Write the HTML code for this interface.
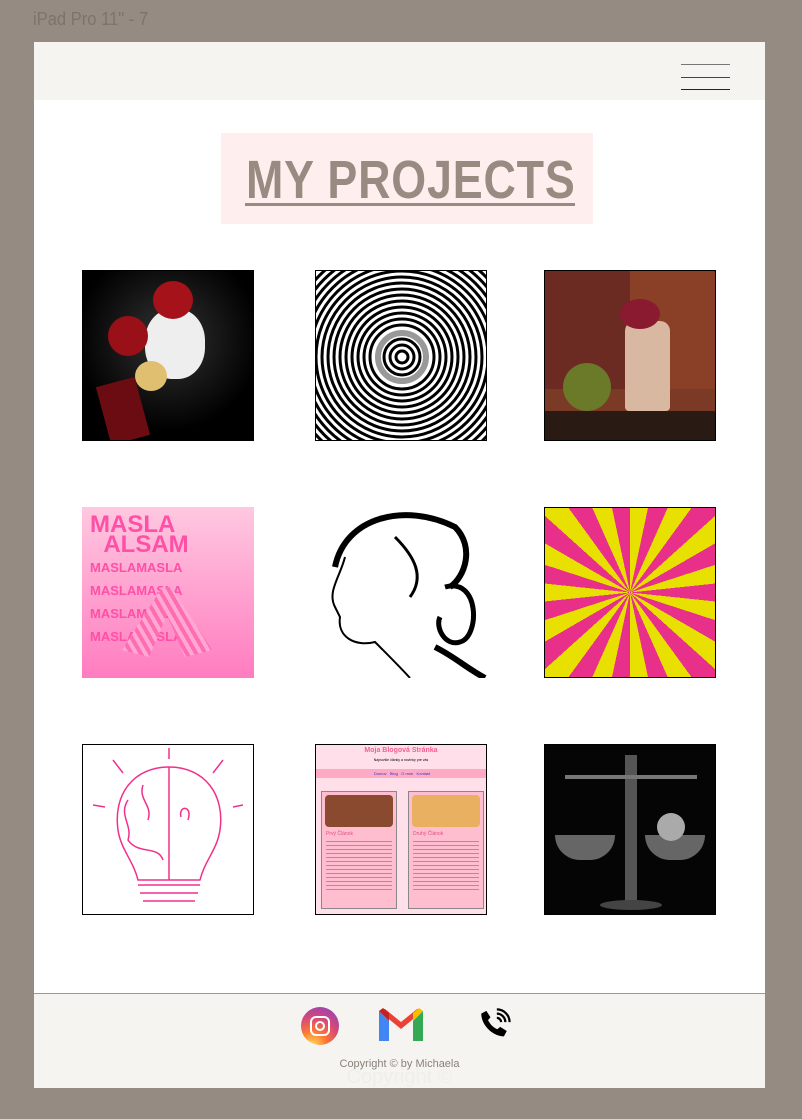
<!DOCTYPE html>
<html><head><meta charset="utf-8"><style>
*{margin:0;padding:0;box-sizing:border-box}
body{width:802px;height:1119px;background:#968b82;position:relative;overflow:hidden;font-family:"Liberation Sans",sans-serif}
.lbl{position:absolute;left:33px;top:9px;font-size:18px;color:#7d736c;transform:scaleX(.92);transform-origin:left}
.frame{position:absolute;left:34px;top:42px;width:731px;height:1046px;background:#fff}
.hdr{position:absolute;left:0;top:0;width:731px;height:58px;background:#f6f4f1}
.hb{position:absolute;left:647px;width:49px;height:1px;background:#444}
.tbox{position:absolute;left:187px;top:91px;width:372px;height:91px;background:#ffeeee}
.ttl{position:absolute;left:212px;top:107px;width:328px;font-size:54px;font-weight:bold;color:#978b82;white-space:nowrap;transform:scaleX(.83);transform-origin:left;letter-spacing:1px}
.ul{position:absolute;left:211px;top:161px;width:330px;height:3px;background:#978b82}
.im{position:absolute;width:172px;height:171px;overflow:hidden;border:1px solid #000}
.ftr{position:absolute;left:0;top:951px;width:731px;height:95px;background:#f6f4f1;border-top:1px solid #999}
.cp{position:absolute;left:0;width:731px;text-align:center;top:64px;font-size:11px;color:#8a817a}
</style></head><body>
<div class="lbl">iPad Pro 11" - 7</div>
<div class="frame">
<div class="hdr"><div class="hb" style="top:22px;background:#777"></div><div class="hb" style="top:35px"></div><div class="hb" style="top:47px;background:#222"></div></div>
<div class="tbox"></div>
<div class="ttl">MY PROJECTS</div>
<div class="ul"></div>

<div class="im" style="left:48px;top:228px;background:radial-gradient(circle at 50% 40%,#333,#000 70%)">
<div style="position:absolute;left:62px;top:38px;width:60px;height:70px;background:#eee;border-radius:45%"></div>
<div style="position:absolute;left:25px;top:45px;width:40px;height:40px;background:#9a1018;border-radius:50%"></div>
<div style="position:absolute;left:70px;top:10px;width:40px;height:38px;background:#a5121a;border-radius:50%"></div>
<div style="position:absolute;left:52px;top:90px;width:32px;height:30px;background:#e0c070;border-radius:50%"></div>
<div style="position:absolute;left:20px;top:110px;width:40px;height:60px;background:#6a0c12;transform:rotate(-15deg)"></div>
</div>

<div class="im" style="left:281px;top:228px;background:#fff">
<svg width="172" height="171" viewBox="0 0 172 171"><g fill="none" stroke="#000" stroke-width="3">
<circle cx="86" cy="86" r="6"/><circle cx="86" cy="86" r="12"/><circle cx="86" cy="86" r="18"/><circle cx="86" cy="86" r="24" stroke="#999" stroke-width="6"/><circle cx="86" cy="86" r="32"/><circle cx="86" cy="86" r="38"/><circle cx="86" cy="86" r="44"/><circle cx="86" cy="86" r="50"/><circle cx="86" cy="86" r="56"/><circle cx="86" cy="86" r="62"/><circle cx="86" cy="86" r="68"/><circle cx="86" cy="86" r="74"/><circle cx="86" cy="86" r="80"/><circle cx="86" cy="86" r="86"/><circle cx="86" cy="86" r="92"/><circle cx="86" cy="86" r="98"/><circle cx="86" cy="86" r="104"/><circle cx="86" cy="86" r="110"/><circle cx="86" cy="86" r="116"/></g></svg>
</div>

<div class="im" style="left:510px;top:228px;background:linear-gradient(90deg,#6b2a22 0 50%,#8a4026 50%)">
<div style="position:absolute;left:0;top:140px;width:172px;height:31px;background:#2a1a14"></div>
<div style="position:absolute;left:0;top:118px;width:172px;height:22px;background:#7a3a25"></div>
<div style="position:absolute;left:80px;top:50px;width:45px;height:90px;background:#d8b8a0;border-radius:10px 10px 4px 4px"></div>
<div style="position:absolute;left:18px;top:92px;width:48px;height:48px;background:#6a7a28;border-radius:50%"></div>
<div style="position:absolute;left:75px;top:28px;width:40px;height:30px;background:#8a1a30;border-radius:50%"></div>
</div>

<div class="im" style="left:48px;top:465px;border:none;background:linear-gradient(#ffc8e0,#ff7cc0)">
<div style="position:absolute;left:8px;top:8px;width:155px;height:80px;color:#ff4fa6;font-weight:bold;font-size:24px;line-height:20px">MASLA &nbsp;&nbsp;ALSAM<br><span style="font-size:13px">MASLAMASLA MASLAMASLA<br>MASLAMASLA MASLAMASLA</span></div>
<div style="position:absolute;left:40px;top:80px;width:90px;height:70px;background:repeating-linear-gradient(60deg,#ff6cb4 0 4px,#ffa8d2 4px 8px);clip-path:polygon(45% 0,55% 0,100% 90%,70% 100%,50% 40%,30% 100%,0 90%)"></div>
</div>

<div class="im" style="left:281px;top:465px;border:none;background:#fff">
<svg width="172" height="171" viewBox="0 0 172 171" fill="none" stroke="#000">
<path d="M20 60 C30 10 90 -5 140 20 C160 40 150 70 135 80" stroke-width="6"/>
<path d="M30 50 C25 70 12 85 20 100 L25 110 C22 130 40 140 60 135 C75 150 85 160 95 171" stroke-width="2"/>
<path d="M130 80 C165 70 165 130 145 135 C130 140 120 120 125 110" stroke-width="5"/>
<path d="M120 140 C140 150 150 160 170 171" stroke-width="6"/>
<path d="M80 30 C100 50 110 70 95 90" stroke-width="3"/>
</svg>
</div>

<div class="im" style="left:510px;top:465px;background:conic-gradient(from 0deg at 50% 50%,#e8e000 0 12deg,#e8308a 12deg 24deg,#e8e000 24deg 36deg,#e8308a 36deg 48deg,#e8e000 48deg 60deg,#e8308a 60deg 72deg,#e8e000 72deg 84deg,#e8308a 84deg 96deg,#e8e000 96deg 108deg,#e8308a 108deg 120deg,#e8e000 120deg 132deg,#e8308a 132deg 144deg,#e8e000 144deg 156deg,#e8308a 156deg 168deg,#e8e000 168deg 180deg,#e8308a 180deg 192deg,#e8e000 192deg 204deg,#e8308a 204deg 216deg,#e8e000 216deg 228deg,#e8308a 228deg 240deg,#e8e000 240deg 252deg,#e8308a 252deg 264deg,#e8e000 264deg 276deg,#e8308a 276deg 288deg,#e8e000 288deg 300deg,#e8308a 300deg 312deg,#e8e000 312deg 324deg,#e8308a 324deg 336deg,#e8e000 336deg 348deg,#e8308a 348deg 360deg)"></div>

<div class="im" style="left:48px;top:702px;background:#fff">
<svg width="172" height="171" viewBox="0 0 172 171" fill="none" stroke="#f0308a" stroke-width="1.5">
<path d="M86 22 C50 22 30 50 35 85 C38 105 50 115 55 135 L117 135 C122 115 134 105 137 85 C142 50 122 22 86 22Z"/>
<path d="M86 22 L86 135 M55 140 L117 140 M57 148 L115 148 M60 156 L112 156"/>
<path d="M45 55 C35 70 50 80 45 95 C55 110 75 100 80 115 M60 40 C55 55 70 60 65 75"/>
<path d="M30 15 L40 28 M86 3 L86 14 M140 15 L130 28 M10 60 L22 62 M160 60 L150 62 M105 75 C110 60 95 60 98 72"/>
</svg>
</div>

<div class="im" style="left:281px;top:702px;background:#ffe0ea">
<div style="text-align:center;color:#f06090;font-size:7px;font-weight:bold;margin-top:2px">Moja Blogová Stránka</div>
<div style="text-align:center;font-size:3.5px;margin-top:4px">Najnovšie články a novinky pre vás</div>
<div style="position:absolute;left:0;top:24px;width:172px;height:9px;background:#ffaac4;font-size:4px;text-align:center;color:#33c;line-height:9px">Domov &nbsp; Blog &nbsp; O mne &nbsp; Kontakt</div>
<div style="position:absolute;left:5px;top:46px;width:76px;height:118px;background:#ffbdd0;border:1px solid #888"><div style="margin:3px;height:32px;background:#8a4a30;border-radius:4px"></div><div style="font-size:5px;color:#e05080;margin:4px">Prvý Článok</div><div style="margin:4px;height:50px;background:repeating-linear-gradient(#999 0 1px,transparent 1px 4px)"></div></div>
<div style="position:absolute;left:92px;top:46px;width:76px;height:118px;background:#ffbdd0;border:1px solid #888"><div style="margin:3px;height:32px;background:#e8b060;border-radius:4px"></div><div style="font-size:5px;color:#e05080;margin:4px">Druhý Článok</div><div style="margin:4px;height:50px;background:repeating-linear-gradient(#999 0 1px,transparent 1px 4px)"></div></div>
</div>

<div class="im" style="left:510px;top:702px;background:#050505">
<div style="position:absolute;left:80px;top:10px;width:12px;height:150px;background:#555"></div>
<div style="position:absolute;left:20px;top:30px;width:132px;height:4px;background:#777"></div>
<div style="position:absolute;left:10px;top:90px;width:60px;height:25px;background:#666;border-radius:0 0 30px 30px"></div>
<div style="position:absolute;left:100px;top:90px;width:60px;height:25px;background:#666;border-radius:0 0 30px 30px"></div>
<div style="position:absolute;left:112px;top:68px;width:28px;height:28px;background:#aaa;border-radius:50%"></div>
<div style="position:absolute;left:55px;top:155px;width:62px;height:10px;background:#444;border-radius:50%"></div>
</div>

<div class="ftr">
<div style="position:absolute;left:267px;top:13px;width:38px;height:38px;border-radius:50%;background:radial-gradient(circle at 30% 100%,#fd5 0,#f73 30%,#d2487a 60%,#8540c8 100%)"><div style="position:absolute;left:9px;top:9px;width:20px;height:20px;border:2.5px solid #fff;border-radius:6px"></div><div style="position:absolute;left:14px;top:14px;width:10px;height:10px;border:2.5px solid #fff;border-radius:50%"></div></div>
<svg style="position:absolute;left:343px;top:13px" width="48" height="38" viewBox="0 0 48 38"><path d="M2 4 L2 34 L12 34 L12 14Z" fill="#4285f4"/><path d="M46 4 L46 34 L36 34 L36 14Z" fill="#34a853"/><path d="M2 4 L24 22 L46 4 L40 2 L24 15 L8 2Z" fill="#ea4335"/><path d="M36 14 L46 4 L42 1 L36 6Z" fill="#fbbc04"/><path d="M2 4 L12 14 L12 6 L6 1Z" fill="#c5221f"/></svg>
<svg style="position:absolute;left:443px;top:14px" width="34" height="34" viewBox="0 0 24 24"><path d="M6.6 2 L9.5 6.5 L7.8 8.6 C9 11.3 11.5 13.8 14.3 15 L16.4 13.3 L21 16.2 L19 20 C11 20 3 12 3 4Z" fill="#000"/><path d="M14 7 A3 3 0 0 1 17 10 M14 4 A6 6 0 0 1 20 10 M14 1 A9 9 0 0 1 23 10" fill="none" stroke="#000" stroke-width="1.6"/></svg>
<div class="cp">Copyright © by Michaela</div>
<div style="position:absolute;left:0;width:731px;text-align:center;top:72px;font-size:20px;color:#f0eeea">Copyright ©</div>
</div>
</div>
</body></html>
